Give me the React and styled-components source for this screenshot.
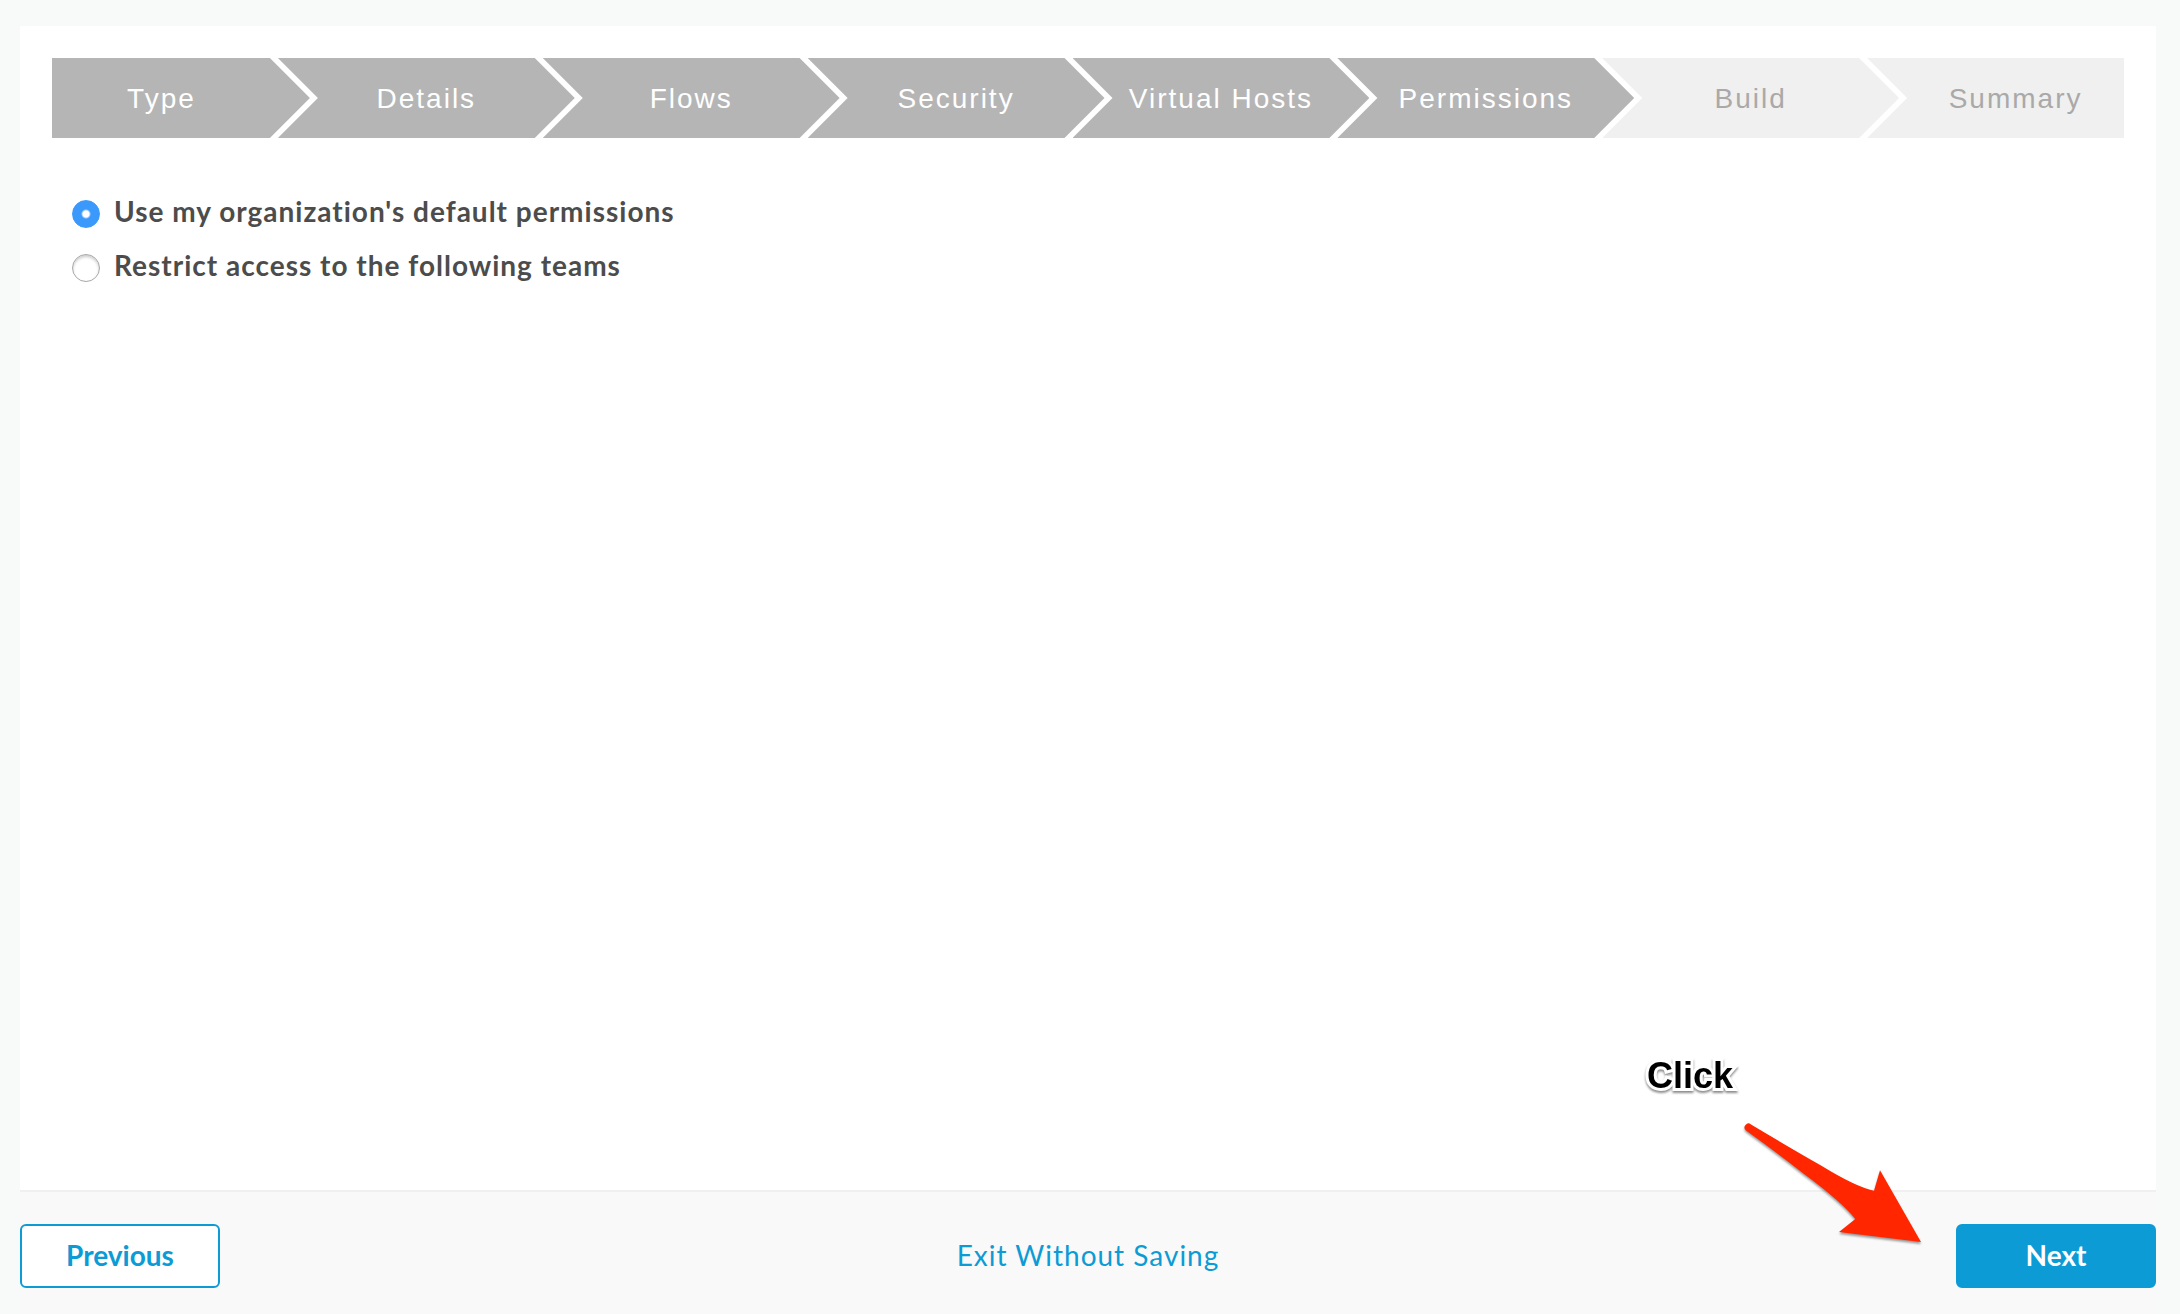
import React, { useState } from "react";
import styled, { createGlobalStyle } from "styled-components";

const GlobalStyle = createGlobalStyle`
  *, *::before, *::after { box-sizing: border-box; }
  body {
    margin: 0;
    background: #f8faf9;
    font-family: Lato, "Open Sans", sans-serif;
  }
`;

const Page = styled.div`
  position: relative;
  display: flex;
  flex-direction: column;
  min-height: 100vh;
  padding: 26px 24px 0 20px;
`;

const Panel = styled.main`
  flex: 1;
  padding: 32px;
  background: #fff;
`;

const Stepper = styled.ol`
  display: flex;
  gap: 8px;
  margin: 0;
  padding: 0;
  list-style: none;
`;

const Step = styled.li`
  box-sizing: content-box;
  flex: 1 1 0;
  min-width: 0;
  margin-right: -40px;
  padding: 2px 40px 0;
  background: ${(p) => (p.$reached ? "#b5b5b5" : "#f0f0f0")};
  color: ${(p) => (p.$reached ? "#fff" : "#a9a9a9")};
  font: 28px/78px "Liberation Sans", Arial, sans-serif;
  letter-spacing: 2px;
  text-align: center;
  white-space: nowrap;
  clip-path: polygon(
    0 0,
    calc(100% - 40px) 0,
    100% 50%,
    calc(100% - 40px) 100%,
    0 100%,
    40px 50%
  );

  &:first-child {
    padding-left: 1px;
    clip-path: polygon(
      0 0,
      calc(100% - 40px) 0,
      100% 50%,
      calc(100% - 40px) 100%,
      0 100%
    );
  }

  &:last-child {
    margin-right: 0;
    padding-right: 0;
    clip-path: polygon(0 0, 100% 0, 100% 100%, 0 100%, 40px 50%);
  }
`;

const Options = styled.fieldset`
  display: flex;
  flex-direction: column;
  gap: 20px;
  margin: 0;
  padding: 56px 20px 0;
  border: 0;
`;

const Option = styled.label`
  display: flex;
  align-items: center;
  gap: 14px;
  color: #4c4c4c;
  font-size: 28px;
  font-weight: 700;
  line-height: 34px;
  letter-spacing: 1px;
`;

const Radio = styled.input`
  appearance: none;
  flex: none;
  width: 28px;
  height: 28px;
  margin: 6px 0 0;
  border: 1px solid #a8a8a8;
  border-radius: 50%;
  background: #fff;
  box-shadow: inset 0 2px 3px rgba(0, 0, 0, 0.2);

  &:checked {
    border-color: #3b99fc;
    background: radial-gradient(circle, #fff 3px, #3b99fc 5px);
    box-shadow: none;
  }
`;

const Footer = styled.footer`
  display: grid;
  grid-template-columns: 1fr auto 1fr;
  align-items: center;
  padding: 32px 0 26px;
  border-top: 2px solid #f0f0f0;
  background: #f9f9f9;
`;

const Button = styled.button`
  width: 200px;
  height: 64px;
  padding: 0 0 2px;
  justify-self: ${(p) => (p.$primary ? "end" : "start")};
  border: 2px solid #0c9bd5;
  border-radius: 6px;
  background: ${(p) => (p.$primary ? "#0c9bd5" : "#fff")};
  color: ${(p) => (p.$primary ? "#fff" : "#0c9bd5")};
  font: 700 28px/34px Lato, "Open Sans", sans-serif;
`;

const ExitLink = styled.a`
  padding-bottom: 2px;
  color: #0c9bd5;
  font-size: 28px;
  line-height: 34px;
  letter-spacing: 1px;
  text-decoration: none;
`;

const Callout = styled.div`
  position: absolute;
  right: 256px;
  bottom: 68px;
  display: flex;
  flex-direction: column;
  gap: 26px;
  width: 277px;
  pointer-events: none;
`;

const CalloutText = styled.span`
  color: #000;
  font: 700 36px/40px "Liberation Sans", Arial, sans-serif;
  -webkit-text-stroke: 6px #fff;
  stroke-linejoin: round;
  paint-order: stroke fill;
  filter: drop-shadow(0 2px 1px rgba(0, 0, 0, 0.45));
`;

const Arrow = styled.svg`
  align-self: flex-end;
  overflow: visible;
  filter: drop-shadow(0 2px 1px rgba(0, 0, 0, 0.4));
`;

const steps = [
  "Type",
  "Details",
  "Flows",
  "Security",
  "Virtual Hosts",
  "Permissions",
  "Build",
  "Summary",
];
const currentStep = 5;

const options = [
  { value: "default", label: "Use my organization's default permissions" },
  { value: "restrict", label: "Restrict access to the following teams" },
];

export default function App() {
  const [access, setAccess] = useState("default");

  return (
    <>
      <GlobalStyle />
      <Page>
        <Panel>
          <Stepper>
            {steps.map((name, i) => (
              <Step
                key={name}
                $reached={i <= currentStep}
                aria-current={i === currentStep ? "step" : undefined}
              >
                {name}
              </Step>
            ))}
          </Stepper>
          <Options>
            {options.map(({ value, label }) => (
              <Option key={value} htmlFor={value}>
                <Radio
                  type="radio"
                  id={value}
                  name="access"
                  value={value}
                  checked={access === value}
                  onChange={() => setAccess(value)}
                />
                {label}
              </Option>
            ))}
          </Options>
        </Panel>
        <Footer>
          <Button type="button">Previous</Button>
          <ExitLink href="#exit">Exit Without Saving</ExitLink>
          <Button type="button" $primary>
            Next
          </Button>
        </Footer>
        <Callout>
          <CalloutText>Click</CalloutText>
          <Arrow width="180" height="124" viewBox="0 0 180 124" aria-hidden="true">
            <path
              d="M7 2.500 Q38 21 77 43.500 Q112 65 130 68.700 L136 48.300 L177 120 L95 110 L111.300 97 Q98 80 60 52 Q32 30 2 8.500 A3.700 3.700 0 0 1 7 2.500 Z"
              fill="#ff2600"
            />
          </Arrow>
        </Callout>
      </Page>
    </>
  );
}
